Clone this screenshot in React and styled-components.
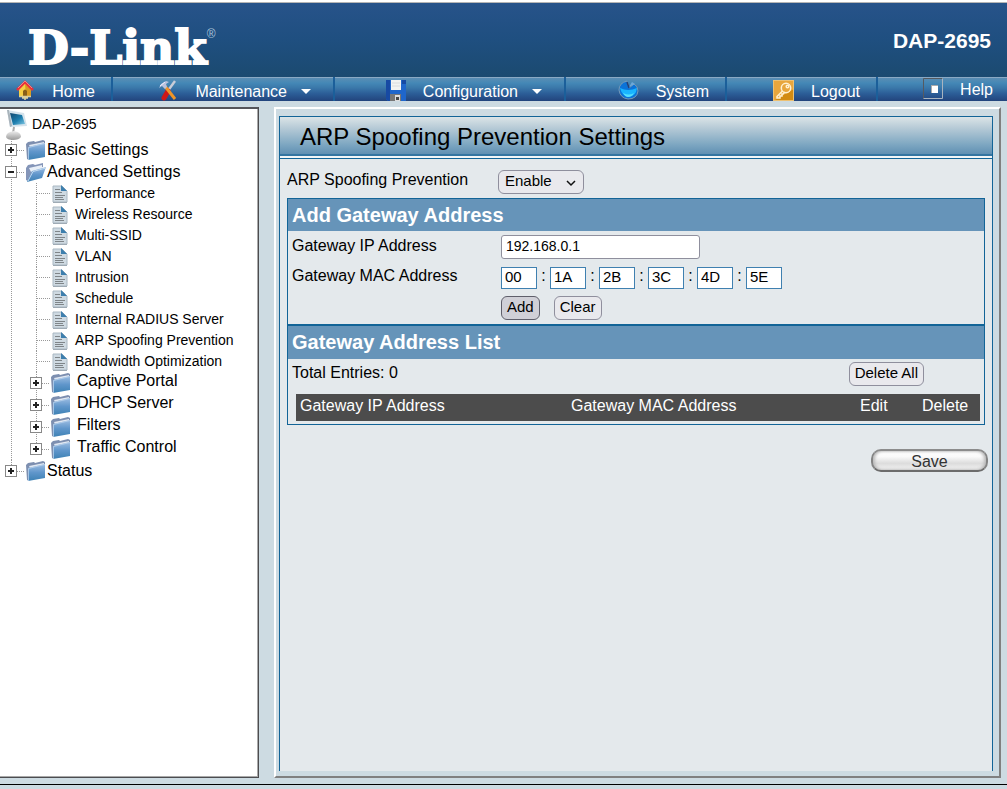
import React, { useState } from "react";
import styled, { createGlobalStyle, css } from "styled-components";

const line = "#126497";
const sans = '"Liberation Sans", Arial, sans-serif';

const GlobalStyle = createGlobalStyle`
  *, *::before, *::after { box-sizing: border-box; }
  body { margin: 0; background: #cddbe2; font: 16px/20px ${sans}; color: #000; }
  button, input, select { font-family: ${sans}; color: #000; margin: 0; }
`;

const Page = styled.div`
  min-height: 100vh;
  display: flex;
  flex-direction: column;
`;

const Banner = styled.header`
  display: flex;
  justify-content: space-between;
  align-items: flex-start;
  height: 77px;
  padding: 18px 16px 0 28px;
  border-top: 2px solid #fff;
  box-shadow: inset 0 1px #b5b5b5;
  background: linear-gradient(#27538a, #1f4f80 50%, #1b4a70);
  color: #fff;
`;

const Logo = styled.a`
  display: flex;
  align-items: flex-start;
  color: #fff;
  text-decoration: none;
  font: bold 47px/56px "DejaVu Serif", serif;
  -webkit-text-stroke: 2px #fff;
`;

const Registered = styled.sup`
  font: 12px/12px ${sans};
  color: #a9c3da;
  margin-top: 8px;
  -webkit-text-stroke: 0;
`;

const Model = styled.div`
  font-size: 21px;
  line-height: 24px;
  font-weight: bold;
  padding-top: 9px;
`;

const Nav = styled.nav`
  display: grid;
  grid-template-columns: 113fr 222fr 231fr 161fr 151fr 129fr;
  height: 24px;
  background: linear-gradient(#4a93c2, #22467c);
`;

const NavItem = styled.a`
  display: flex;
  align-items: flex-start;
  justify-content: flex-end;
  padding: ${(p) => (p.$last ? 1 : 3)}px ${(p) => (p.$menu ? 22 : p.$last ? 14 : 16)}px 0 0;
  height: 24px;
  overflow: hidden;
  color: #fff;
  text-decoration: none;
  background: linear-gradient(#8aa9c4 0, #8aa9c4 1px, #5b8db3 1px, #4488b6 6px, #3a77a9 11px, #2b5c96 17px, #22447c);
  border-right: ${(p) => (p.$last ? "0" : "2px solid #1b5f9a")};
  svg { flex: none; }
  span { margin-left: 17px; line-height: 24px; }
`;

const Arrow = styled.i`
  margin: 9px 0 0 14px;
  border: 5px solid transparent;
  border-top-color: #fff;
  border-bottom: 0;
`;

const Body = styled.div`
  flex: 1;
  display: grid;
  grid-template-columns: 259px 1fr;
  gap: 15px;
  padding: 6px 6px 6px 0;
`;

const Sidebar = styled.aside`
  background: #fff;
  border: solid #4c4c50;
  border-width: 0 1px 1px 0;
  box-shadow: inset 0 2px #55555a, inset -1px -1px #a9a9a9;
  padding-top: 2px;
`;

const Root = styled.a`
  display: flex;
  align-items: flex-start;
  height: 30px;
  padding-left: 5px;
  gap: 4px;
  font-size: 14px;
  line-height: 30px;
  color: #000;
  text-decoration: none;
`;

const dots = css`linear-gradient(#999 1px, transparent 1px)`;

const Tree = styled.ul`
  list-style: none;
  margin: 0;
  padding: 0;
  padding-left: ${(p) => (p.$nested ? 25 : 0)}px;
`;

const Node = styled.li`
  background: ${dots} 11px 0 / 1px 2px repeat-y;
  &:last-child {
    background: linear-gradient(#fff, #fff) 0 11px / 20px 100% no-repeat,
      ${dots} 11px 0 / 1px 2px repeat-y;
  }
`;

const Row = styled.div`
  display: flex;
  align-items: center;
  height: ${(p) => (p.$leaf ? 21 : 22)}px;
  padding-left: ${(p) => (p.$leaf ? 12 : 5)}px;
  svg { flex: none; }
`;

const Toggle = styled.button`
  width: 12px;
  height: 12px;
  padding: 0;
  border: 1px solid #888;
  background:
    linear-gradient(#222, #222) center / 6px 2px no-repeat,
    linear-gradient(#222, #222) center / ${(p) => (p.$open ? "0 0" : "2px 6px")} no-repeat,
    #fff;
`;

const Dash = styled.i`
  width: ${(p) => (p.$long ? 14 : 8)}px;
  height: 1px;
  background: linear-gradient(90deg, #999 1px, transparent 1px) 0 0 / 2px 1px;
  margin-right: 1px;
`;

const TreeLink = styled.a`
  color: #000;
  text-decoration: none;
  white-space: nowrap;
  font-size: ${(p) => (p.$leaf ? 14 : 16)}px;
  margin-left: ${(p) => (p.$leaf ? 7 : p.$nested ? 6 : 1)}px;
  padding-bottom: ${(p) => (p.$leaf ? 2 : p.$nested ? 4 : 0)}px;
`;

const Main = styled.main`
  border: 2px solid;
  border-color: #fff #808080 #808080 #fff;
  padding: 7px 6px 5px 3px;
  display: flex;
`;

const Panel = styled.section`
  flex: 1;
  background: #e4e9ec;
  border: solid ${line};
  border-width: 1px 1px 0;
`;

const Title = styled.h1`
  margin: 0;
  height: 42px;
  padding-left: 20px;
  border-bottom: 1px solid ${line};
  font-size: 24px;
  font-weight: normal;
  line-height: 40px;
  background: linear-gradient(#dbe4e7, #b3c8d5 12px, #7fa8c2 27px, #6090b3 37px, #3475a1 37px, #3475a1 39px, #f1f5f7 39px);
`;

const Field = styled.div`
  display: grid;
  grid-template-columns: ${(p) => (p.$wide ? 211 : 209)}px 1fr;
  min-height: ${(p) => p.$height}px;
  align-items: start;
  padding-left: ${(p) => (p.$wide ? 7 : 4)}px;
`;

const Label = styled.label`
  padding-top: ${(p) => p.$top || 0}px;
`;

const SelectWrap = styled.div`
  position: relative;
  width: 86px;
  margin-top: 11px;
  svg { position: absolute; right: 8px; top: 8px; pointer-events: none; }
`;

const control = css`
  height: 24px;
  border: 1px solid #8f8f9d;
  border-radius: 6px;
  background: #e9e9ed;
  font-size: 15px;
  line-height: 20px;
  padding: 0 5px 2px;
`;

const Select = styled.select`
  ${control}
  padding: 0 6px 2px;
  appearance: none;
  width: 100%;
`;

const Button = styled.button`
  ${control}
  ${(p) => p.$active && css`background: #d0d0d7; border-color: #5f5f6b;`}
`;

const Box = styled.div`
  margin: 0 7px;
  border: 1px solid ${line};
`;

const SectionTitle = styled.h2`
  margin: 0;
  height: ${(p) => (p.$ruled ? 35 : 32)}px;
  padding-left: 4px;
  border-top: ${(p) => (p.$ruled ? 2 : 0)}px solid ${line};
  background: #6694b9;
  color: #fff;
  font-size: 20px;
  line-height: 32px;
`;

const Input = styled.input`
  height: 24px;
  width: 199px;
  margin-top: 4px;
  padding: 0 4px 2px;
  border: 1px solid #8f8f9d;
  border-radius: 3px;
  background: #fff;
  font-size: 14px;
`;

const MacRow = styled.div`
  display: flex;
  padding-top: 6px;
`;

const MacInput = styled.input`
  width: 36px;
  height: 22px;
  padding: 0 3px 4px;
  border: 1px solid #3f80b0;
  border-radius: 0;
  font-size: 15px;
`;

const Colon = styled.span`
  width: 13px;
  text-align: center;
  line-height: 18px;
`;

const Actions = styled.div`
  display: flex;
  gap: 14px;
  padding-top: 4px;
`;

const Summary = styled.div`
  display: flex;
  justify-content: space-between;
  align-items: flex-start;
  height: 35px;
  padding: 3px 60px 0 4px;
  line-height: 22px;
`;

const Table = styled.table`
  width: calc(100% - 12px);
  margin: 0 4px 3px 8px;
  table-layout: fixed;
  border-collapse: collapse;
  background: #4c4c4c;
  color: #fff;
`;

const Th = styled.th`
  width: ${(p) => (p.$width ? p.$width + "px" : "auto")};
  height: 27px;
  padding: 0 0 4px 4px;
  font-weight: normal;
  text-align: left;
`;

const SaveBar = styled.div`
  display: flex;
  justify-content: flex-end;
  padding: 24px 4px 0 0;
`;

const SaveButton = styled.button`
  width: 117px;
  height: 23px;
  padding: 2px 0 0;
  border: 2px solid #777;
  border-color: #8c8c8c #848484 #6c6c6c;
  border-radius: 10px;
  background: linear-gradient(#fff, #fafafa 30%, #dcdcdc 65%, #f3f3f3);
  box-shadow: inset 2px 0 3px #bbb, inset -2px 0 3px #bbb;
  font-size: 16px;
  line-height: 17px;
  color: #333;
`;

const Foot = styled.footer`
  height: 5px;
  border-top: 1px solid #000;
`;

const HomeIcon = () => (
  <svg width="20" height="20" viewBox="0 0 20 20" aria-hidden="true">
    <path d="M4 9L10 3l6 6v7H4z" fill="#f6cf45" />
    <path d="M10 4l6 5v7h-5z" fill="#d99b20" />
    <path d="M2 10l8-8 8 8" fill="none" stroke="#e8303c" strokeWidth="2.6" />
    <path d="M3 8l7-7 7 7" fill="none" stroke="#fba" strokeWidth=".6" />
    <path d="M8 16v-5q2-3 4 0v5z" fill="#885f18" />
    <path d="M4 16.500h12M10 16v4M7 18h6" stroke="#d9cf9f" strokeWidth="1.600" />
  </svg>
);

const ToolsIcon = () => (
  <svg width="20" height="21" viewBox="0 0 20 21" aria-hidden="true">
    <path d="M17 1L9 12" stroke="#c9cdd8" strokeWidth="2.400" />
    <path d="M10 11l-4 7" stroke="#cf1717" strokeWidth="5" strokeLinecap="round" />
    <path d="M6 5l11 14" stroke="#f09528" strokeWidth="3" />
    <path d="M1 8l2-4 5-3 3 1-3 2 1 3-2 2-3-3z" fill="#b9c2df" />
    <path d="M2 6l5-4" stroke="#eef" />
  </svg>
);

const DiskIcon = () => (
  <svg width="20" height="21" viewBox="0 0 20 21" aria-hidden="true">
    <path d="M0 0h20v21H2l-2-2z" fill="#1f66cb" />
    <path d="M0 0h4v21H2l-2-2zM16 0h4v4h-4z" fill="#174aa3" />
    <path d="M5 0h10v10H5z" fill="#f3f3f1" />
    <path d="M6 3h8M6 6h8" stroke="#d9dcdf" />
    <path d="M4 14h11v7H4z" fill="#777" />
    <path d="M9 15h5v6H9z" fill="#ddd" />
    <path d="M10 17h3v3h-3z" fill="#484848" />
  </svg>
);

const SystemIcon = () => (
  <svg width="21" height="20" viewBox="0 0 21 20" aria-hidden="true">
    <path d="M9 1Q1 3 1 10q1 8 9 9 9 0 10-8 0-5-4-7l-5 4z" fill="#0b73d8" stroke="#7799b5" />
    <path d="M2 8q8 4 17 0-1 8-8 9-7-1-9-9z" fill="#19b5ff" />
    <path d="M5 13q6 3 11 0-2 4-6 4-3 0-5-4z" fill="#54e0ff" />
    <path d="M11 7l3-5 3 2z" fill="#6da8d8" />
    <path d="M9 2l2 6" stroke="#223f78" strokeWidth="1.500" />
  </svg>
);

const KeyIcon = () => (
  <svg width="21" height="21" viewBox="0 0 21 21" aria-hidden="true">
    <rect width="21" height="21" fill="#e8a63d" />
    <path d="M0 21L21 9v12z" fill="#d28b13" />
    <rect x=".5" y=".5" width="20" height="20" fill="none" stroke="#edc173" />
    <g fill="none" stroke="#fff1d2" strokeWidth="1.500">
      <circle cx="13" cy="8" r="4.700" />
      <circle cx="14.500" cy="6.500" r="1.300" />
      <path d="M9.500 11L4 16.500V18h3v-2h2v-2h1l2-2" />
    </g>
  </svg>
);

const HelpIcon = () => (
  <svg width="20" height="21" viewBox="0 0 20 21" aria-hidden="true">
    <path d="M.5 20.500V.5h19" fill="none" stroke="#555a60" />
    <path d="M.5 20.500h19V.5" fill="none" stroke="#a8b4c0" />
    <path d="M8 7h7v8H8z" fill="#aaa" />
    <path d="M9 8h6v7H9z" fill="#fff" />
  </svg>
);

const ComputerIcon = () => (
  <svg width="23" height="32" viewBox="0 0 23 32" aria-hidden="true">
    <defs>
      <linearGradient id="screen" x1="0" y1="0" x2="1" y2="1">
        <stop offset="0" stopColor="#12486f" /><stop offset=".55" stopColor="#1d7eae" /><stop offset="1" stopColor="#82c9e4" />
      </linearGradient>
      <linearGradient id="base" x1="0" y1="0" x2="0" y2="1">
        <stop offset="0" stopColor="#eee" /><stop offset="1" stopColor="#999" />
      </linearGradient>
    </defs>
    <path d="M2 1l17 3 3 13-17 1z" fill="#d5e3ec" />
    <path d="M2 1l2 0 3 16-2 1z" fill="#a9b3ba" />
    <path d="M5 4l12 2 3 9-12 1z" fill="url(#screen)" />
    <path d="M9 18l-1 6" stroke="#aaa" strokeWidth="2" />
    <path d="M1 28q0-5 8-6 7 1 7 6-2 3-8 3-6 0-7-3z" fill="url(#base)" />
  </svg>
);

const FolderIcon = () => (
  <svg width="20" height="21" viewBox="0 0 20 21" aria-hidden="true">
    <defs>
      <linearGradient id="folder" x1="0" y1="0" x2="0" y2="1">
        <stop offset="0" stopColor="#9dbde2" /><stop offset=".5" stopColor="#6096cb" /><stop offset="1" stopColor="#3d81b4" />
      </linearGradient>
    </defs>
    <path d="M0 4l2-2 6-1 1 1 8-2 2 1v3L3 7v13l-2-1z" fill="#7d8fb0" />
    <path d="M3 5l15-3v2L4 7z" fill="#e1e8f2" />
    <path d="M2 7l17-4v14L2 20z" fill="url(#folder)" />
    <path d="M2.500 20V7.500L19 3.500" fill="none" stroke="#b9d2ec" strokeWidth=".8" />
  </svg>
);

const OpenFolderIcon = () => (
  <svg width="20" height="19" viewBox="0 0 20 19" aria-hidden="true">
    <path d="M0 5l2-3 5-1 2 1 8-2v4L7 7 2 18l-2-1z" fill="#8495b8" />
    <path d="M3 5l13-3v3L5 9z" fill="#e8eff7" />
    <path d="M6 8l14-4-4 11-15 4z" fill="url(#folder)" />
    <path d="M2 18L7 8.500 20 5" fill="none" stroke="#c1d9ef" />
  </svg>
);

const PageIcon = () => (
  <svg width="16" height="18" viewBox="0 0 16 18" aria-hidden="true">
    <path d="M1 1h9l5 5v11H1z" fill="#cfdae2" stroke="#aab8c3" />
    <path d="M9 0l6 6H9z" fill="#3d7fae" />
    <path d="M3 4.500h5M3 7.500h7M3 10.500h10M3 12.500h8M3 14.500h9" stroke="#7f8589" />
    <path d="M1 17.500h14" stroke="#9fabb5" />
  </svg>
);

const navItems = [
  { text: "Home", Icon: HomeIcon },
  { text: "Maintenance", Icon: ToolsIcon, menu: true },
  { text: "Configuration", Icon: DiskIcon, menu: true },
  { text: "System", Icon: SystemIcon },
  { text: "Logout", Icon: KeyIcon },
  { text: "Help", Icon: HelpIcon },
];

const tree = [
  { text: "Basic Settings" },
  {
    text: "Advanced Settings",
    children: [
      ...["Performance", "Wireless Resource", "Multi-SSID", "VLAN", "Intrusion", "Schedule",
        "Internal RADIUS Server", "ARP Spoofing Prevention", "Bandwidth Optimization",
      ].map((text) => ({ text, leaf: true })),
      { text: "Captive Portal" },
      { text: "DHCP Server" },
      { text: "Filters" },
      { text: "Traffic Control" },
    ],
  },
  { text: "Status" },
];

function TreeNode({ item, nested }) {
  const open = Boolean(item.children);
  return (
    <Node>
      <Row $leaf={item.leaf}>
        {!item.leaf && (
          <Toggle type="button" $open={open} aria-expanded={open} aria-label={item.text} />
        )}
        <Dash $long={item.leaf} />
        {item.leaf ? <PageIcon /> : open ? <OpenFolderIcon /> : <FolderIcon />}
        <TreeLink href="#" $leaf={item.leaf} $nested={nested}>{item.text}</TreeLink>
      </Row>
      {open && (
        <Tree $nested>
          {item.children.map((c) => <TreeNode key={c.text} item={c} nested />)}
        </Tree>
      )}
    </Node>
  );
}

export default function App() {
  const [ip, setIp] = useState("192.168.0.1");
  const [mac, setMac] = useState(["00", "1A", "2B", "3C", "4D", "5E"]);
  const clear = () => {
    setIp("");
    setMac(mac.map(() => ""));
  };

  return (
    <Page>
      <GlobalStyle />
      <Banner>
        <Logo href="#">D-Link<Registered>®</Registered></Logo>
        <Model>DAP-2695</Model>
      </Banner>
      <Nav>
        {navItems.map(({ text, Icon, menu }, i) => (
          <NavItem key={text} href="#" $menu={menu} $last={i === navItems.length - 1}>
            <Icon />
            <span>{text}</span>
            {menu && <Arrow />}
          </NavItem>
        ))}
      </Nav>
      <Body>
        <Sidebar>
          <Root href="#"><ComputerIcon />DAP-2695</Root>
          <Tree>
            {tree.map((item) => <TreeNode key={item.text} item={item} />)}
          </Tree>
        </Sidebar>
        <Main>
          <Panel>
            <Title>ARP Spoofing Prevention Settings</Title>
            <Field $wide $height={39}>
              <Label htmlFor="arp" $top={11}>ARP Spoofing Prevention</Label>
              <SelectWrap>
                <Select id="arp" defaultValue="Enable">
                  <option>Enable</option>
                  <option>Disable</option>
                </Select>
                <svg width="10" height="10" viewBox="0 0 10 10" aria-hidden="true">
                  <path d="M1 3l4 4 4-4" fill="none" stroke="#111" strokeWidth="1.500" />
                </svg>
              </SelectWrap>
            </Field>
            <Box>
              <SectionTitle>Add Gateway Address</SectionTitle>
              <Field $height={30}>
                <Label htmlFor="ip" $top={5}>Gateway IP Address</Label>
                <Input id="ip" value={ip} onChange={(e) => setIp(e.target.value)} />
              </Field>
              <Field $height={31}>
                <Label htmlFor="mac0" $top={5}>Gateway MAC Address</Label>
                <MacRow>
                  {mac.map((v, i) => (
                    <React.Fragment key={i}>
                      {i > 0 && <Colon>:</Colon>}
                      <MacInput
                        id={"mac" + i}
                        aria-label={"MAC byte " + (i + 1)}
                        maxLength={2}
                        value={v}
                        onChange={(e) => setMac(mac.map((m, j) => (j === i ? e.target.value : m)))}
                      />
                    </React.Fragment>
                  ))}
                </MacRow>
              </Field>
              <Field $height={32}>
                <span />
                <Actions>
                  <Button type="button" $active>Add</Button>
                  <Button type="button" onClick={clear}>Clear</Button>
                </Actions>
              </Field>
              <SectionTitle $ruled>Gateway Address List</SectionTitle>
              <Summary>
                <span>Total Entries: 0</span>
                <Button type="button">Delete All</Button>
              </Summary>
              <Table>
                <thead>
                  <tr>
                    <Th scope="col">Gateway IP Address</Th>
                    <Th scope="col" $width={289}>Gateway MAC Address</Th>
                    <Th scope="col" $width={62}>Edit</Th>
                    <Th scope="col" $width={62}>Delete</Th>
                  </tr>
                </thead>
              </Table>
            </Box>
            <SaveBar>
              <SaveButton type="button">Save</SaveButton>
            </SaveBar>
          </Panel>
        </Main>
      </Body>
      <Foot />
    </Page>
  );
}
